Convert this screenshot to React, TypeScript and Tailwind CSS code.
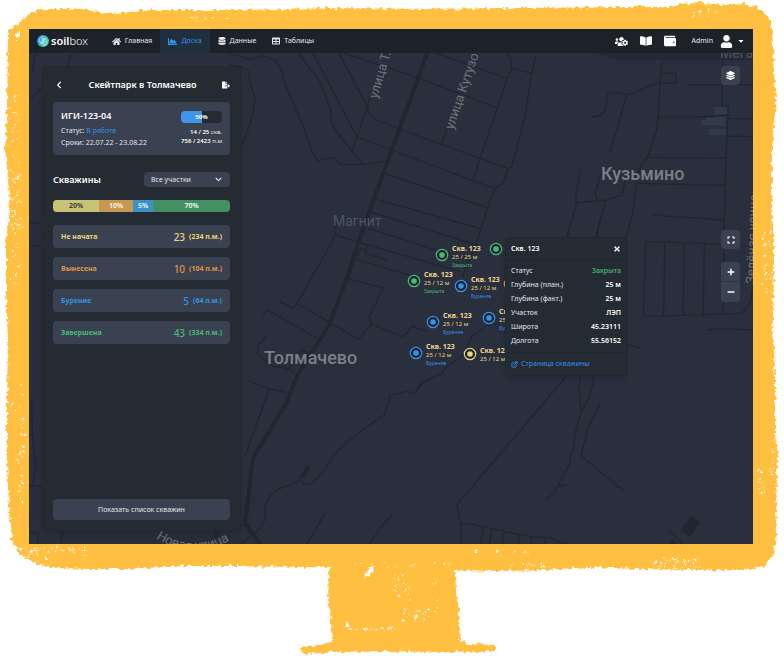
import type { ReactNode } from "react";
import {
  FaBookOpen,
  FaCaretDown,
  FaChartArea,
  FaChevronDown,
  FaChevronLeft,
  FaDatabase,
  FaExpand,
  FaFileExport,
  FaHome,
  FaLayerGroup,
  FaMinus,
  FaPlus,
  FaTable,
  FaTimes,
  FaUser,
  FaUsersCog,
  FaWallet,
} from "react-icons/fa";
import { FiExternalLink } from "react-icons/fi";

/* ---------- Hand-painted monitor ---------- */

function makeRandom(seed: number) {
  let s = seed;
  return () => {
    s = (s * 16807) % 2147483647;
    return s / 2147483647;
  };
}

type Area = [x: number, y: number, w: number, h: number, count: number];

const speckAreas: Area[] = [
  [10, 90, 9, 200, 60],
  [9, 170, 14, 60, 34],
  [19, 380, 5, 145, 34],
  [10, 400, 12, 60, 8],
  [50, 546, 36, 9, 20],
  [20, 548, 30, 18, 34],
  [150, 17, 140, 2, 12],
  [690, 9, 30, 8, 10],
  [762, 230, 10, 65, 36],
  [758, 470, 7, 28, 10],
  [771, 435, 4, 40, 12],
  [470, 551, 60, 2, 12],
  [510, 563, 40, 4, 20],
  [655, 558, 45, 10, 44],
  [335, 563, 115, 5, 20],
  [392, 572, 18, 28, 24],
  [402, 608, 34, 13, 30],
  [348, 628, 46, 2, 24],
  [432, 580, 6, 40, 6],
];

function buildSpecks() {
  const random = makeRandom(4821);
  return speckAreas.flatMap(([x, y, w, h, count]) =>
    Array.from({ length: count }, () => ({
      x: x + random() * w,
      y: y + random() * h,
      rx: 0.4 + random() * 0.8,
      ry: 0.3 + random() * 0.6,
    })),
  );
}

const specks = buildSpecks();

function PaintedMonitor() {
  return (
    <svg
      aria-hidden="true"
      className="absolute inset-0 h-full w-full"
      viewBox="0 0 784 656"
      preserveAspectRatio="none"
    >
      <defs>
        <filter id="chalk" x="-2%" y="-2%" width="104%" height="104%">
          <feTurbulence type="fractalNoise" baseFrequency="0.24" numOctaves="3" seed="7" />
          <feDisplacementMap in="SourceGraphic" scale="6" xChannelSelector="R" yChannelSelector="G" />
        </filter>
      </defs>
      <g filter="url(#chalk)">
        <path
          fill="#ffc043"
          d="M8 32 L18 24 L28 15 L36 11 L48 9 L82 9 L108 14 L150 10 L240 10 L330 8 L420 9 L520 8 L620 7 L672 7 L680 4 L700 3 L725 5 L745 4 L762 9 L771 20 L773 45 L774 70 L776 100 L772 150 L772 200 L774 260 L773 320 L775 380 L775 430 L778 455 L776 500 L777 535 L773 555 L764 566 L742 570 L700 570 L640 569 L590 567 L545 570 L500 571 L455 570 L456 592 L459 612 L460 640 L468 644 L495 645 L495 651 L440 652 L380 651 L340 652 L304 654 L300 648 L318 645 L332 642 L331 622 L328 600 L329 567 L290 567 L240 566 L180 566 L130 569 L90 569 L50 568 L32 562 L18 553 L12 540 L9 510 L7 460 L7 400 L8 340 L6 290 L6 240 L10 210 L8 180 L5 150 L7 110 Z"
        />
        <path d="M16 34 L20 31 L16 45 Z M366 571 L374 566 L372 573 L364 579 Z M346 620 L350 626 L346 628 Z" fill="#fff" />
        <g fill="#fff">
          {specks.map((s, i) => (
            <ellipse key={i} cx={s.x} cy={s.y} rx={s.rx} ry={s.ry} />
          ))}
        </g>
      </g>
    </svg>
  );
}

/* ---------- Map ---------- */

function CityMap() {
  return (
    <svg
      aria-hidden="true"
      className="absolute inset-0 h-full w-full"
      viewBox="29 53 724 491"
      preserveAspectRatio="xMinYMin slice"
    >
      <rect x="29" y="53" width="724" height="491" fill="#292f3d" />
      <path d="M595 53 L600 55 L617 60 L753 60 L753 53 Z" fill="#232a35" />
      <path
        d="M714 107h13v9h-13zM701 120h5v-2h9v-1h10v9h-7v-1h-17zM709 129h17v6h-17z"
        fill="#2f3a4c"
      />
      <g fill="none" stroke="#202631" strokeWidth="4" strokeLinejoin="round" strokeLinecap="round">
        <g transform="translate(230 40) scale(.33333)">
          <path d="M0 40L60 58L100 47L140 65L155 90L165 130L200 215L225 270L243 330L262 362L308 352L333 373L400 374L468 364" />
          <path d="M0 73L30 80L55 92L62 135L75 175L67 230L37 315" />
          <path d="M205 40L270 125L302 210L303 240L315 270L400 374" />
          <path d="M250 40L380 290L485 330L793 446" />
          <path d="M328 40L412 203Q420 232 440 240L510 268L835 386" />
          <path d="M345 40L560 112L803 204M418 175L412 203L365 335M620 40L832 115" />
          <path d="M830 40L840 50L845 85L905 100M845 85L832 115L750 355L730 418" />
          <path d="M917 50L905 100L885 230L845 380L835 386L820 428L793 446L770 510L742 600L697 710" />
          <path d="M650 270L636 312M468 402L770 502M440 478L755 567M425 517L742 615M415 565L718 662" />
          <path d="M830 597L1000 597" />
        </g>
        <g transform="translate(230 220) scale(.33333)">
          <path d="M315 0L315 45L300 75L262 145L243 172L232 200L190 265L152 245M315 45L380 65L690 155" />
          <path d="M205 252L385 358L425 312L417 290L440 245L458 203L352 175M425 312L518 350L530 340L545 318L592 335" />
          <path d="M97 287L113 270L265 357M108 352L83 378L83 403L125 437L175 447L200 460M178 444L215 390L240 400" />
          <path d="M58 483L117 507L175 518M117 507L47 705M380 118L560 172M383 108L393 85L408 90L412 75M408 90L408 100L470 120" />
          <path d="M600 478L572 490L555 520L528 514L480 528L465 583L400 628L340 677L305 712L285 750L240 793L222 793L210 778L180 795L145 807L122 825L105 857L105 900L85 930L35 970" />
          <path d="M285 880L232 970M485 888L460 912L420 970M0 935L40 915" />
          <path strokeWidth="14" d="M217 768L225 757L232 744" />
        </g>
        <g transform="translate(400 220) scale(.33333)">
          <path d="M340 290L315 335L290 310L255 320L215 350L185 410L140 440L125 460L70 485L50 510" />
          <path d="M515 0L500 50M600 0L590 50M680 375Q700 372 720 385" />
        </g>
        <g transform="translate(392 370) scale(.33333)">
          <path d="M525 14L510 35L195 403L206 463L206 522M206 463L235 462L340 485L425 502L475 502L500 517L525 521" />
          <path d="M274 473L265 522M300 478L292 522M337 486L330 522M382 495L377 522M420 502L416 522M460 505L457 522" />
          <path d="M565 14L561 60L568 125L548 195L544 240L537 255L533 280L497 348L485 370L460 390M497 348L527 344" />
          <path d="M605 14L604 40L590 85L568 125M624 100L590 170L575 225L568 257L675 348L695 357M827 482L840 488L870 521" />
          <path fill="#202631" stroke="none" d="M897 437L924 457L893 500L866 480ZM833 522L843 510L856 522Z" />
        </g>
        <g transform="translate(560 0) scale(.33333)">
          <path d="M307 180L300 247L295 352L290 390L263 470L240 500L228 560L218 640L198 712" />
          <path d="M300 247L200 285L170 278L143 282L137 320Q133 352 95 351M200 285L180 355L150 457" />
          <path d="M305 220L347 220L347 250L300 250M385 254L579 254M295 352L400 352L500 345" />
          <path d="M487 185L487 318L505 320L497 500L493 660L490 940M505 355L579 356M503 408L579 410" />
          <path d="M263 472L497 475M233 550L495 556M277 645L493 660" />
          <path d="M60 510L46 600L50 608L137 600L185 585L200 530M110 600L105 580L125 515M50 608L22 712M137 600L107 712" />
          <path d="M257 725L433 730L579 740M257 725L250 950L545 940L570 910L579 860M314 727L311 948M372 730L370 948M433 730L430 945" />
          <path d="M440 990L475 985L579 990" />
        </g>
        <g transform="translate(0 53) scale(.33333)">
          <path d="M105 0L97 60M218 0L190 65L125 105L87 142M90 508L125 513M90 578L125 578" />
        </g>
        <g transform="translate(0 400) scale(.33333)">
          <path d="M95 0L97 100L107 200L98 258M87 258L125 258M87 397L115 400L115 430M187 397L183 430M648 395L648 430" />
        </g>
        <path d="M427 53L420 73L399 130L387 163L362 232L347 278L329 325L318 343L297 376L286 404L253 458L245 523L260 544" />
      </g>
      <g className="font-[Roboto,'Noto_Sans',sans-serif]" fill="#7c7f87" fontWeight="500">
        <text x="601" y="180" fontSize="18">Кузьмино</text>
        <text x="264" y="364" fontSize="18">Толмачево</text>
        <text x="333" y="226" fontSize="14" fontWeight="400" fill="#4b5467">Магнит</text>
        <text x="720" y="58" fontSize="14" fontWeight="400" fill="#4b5467">Мега</text>
        <g fontSize="13" fontWeight="400" fill="#6f737c">
          <text transform="translate(377 99) rotate(-73)">улица Т.</text>
          <text transform="translate(453 130) rotate(-71)">улица Кутузо</text>
          <text transform="translate(755 284) rotate(-88)">Зелёная улица</text>
          <path id="lane" d="M156 538Q196 564 240 534" fill="none" />
          <text>
            <textPath href="#lane">Новая улица</textPath>
          </text>
        </g>
      </g>
    </svg>
  );
}

type Tone = "green" | "blue" | "yellow" | "orange";

const toneText: Record<Tone, string> = {
  green: "text-[#48bb78]",
  blue: "text-[#3592e6]",
  yellow: "text-[#ecd37c]",
  orange: "text-[#e0924a]",
};

type Well = { x: number; y: number; tone: Tone; depth?: string; status?: string };

const wells: Well[] = [
  { x: 413, y: 202, tone: "green", depth: "25 / 25 м", status: "Закрыта" },
  { x: 467, y: 196, tone: "green" },
  { x: 385, y: 228, tone: "green", depth: "25 / 12 м", status: "Закрыта" },
  { x: 432, y: 233, tone: "blue", depth: "25 / 12 м", status: "Бурение" },
  { x: 481, y: 231, tone: "orange" },
  { x: 404, y: 269, tone: "blue", depth: "25 / 12 м", status: "Бурение" },
  { x: 460, y: 265, tone: "blue", depth: "25 / 12 м", status: "Бурение" },
  { x: 387, y: 300, tone: "blue", depth: "25 / 12 м", status: "Бурение" },
  { x: 441, y: 301, tone: "yellow", depth: "25 / 12 м" },
];

function WellPin({ well }: { well: Well }) {
  return (
    <div className="absolute flex -translate-y-1/2 items-center gap-[3px]" style={{ left: well.x - 7, top: well.y }}>
      <svg viewBox="0 0 14 14" className={`size-[14px] ${toneText[well.tone]}`} aria-hidden="true">
        <circle cx="7" cy="7" r="5.700" fill="#1d2330" stroke="currentColor" strokeWidth="1.200" />
        <circle cx="7" cy="7" r="2.800" fill="currentColor" />
      </svg>
      {well.depth && (
        <div className="pt-[2px] text-[7px] leading-[9px] whitespace-nowrap text-[#f1d68a]">
          <p className="font-bold">Скв. 123</p>
          <p className="text-[6px]">{well.depth}</p>
          {well.status && <p className={`text-[5px] leading-[6px] ${toneText[well.tone]}`}>{well.status}</p>}
        </div>
      )}
    </div>
  );
}

const details = [
  { label: "Статус", value: "Закрыта", accent: true },
  { label: "Глубина (план.)", value: "25 м" },
  { label: "Глубина (факт.)", value: "25 м" },
  { label: "Участок", value: "ЛЭП" },
  { label: "Широта", value: "45.23111" },
  { label: "Долгота", value: "55.56152" },
];

function WellPopup() {
  return (
    <article className="absolute left-[476px] top-[184px] w-[122px] rounded border border-[#20262e] bg-[#252b33] text-[7px] leading-[14px] text-[#e2e5ea] shadow-md">
      <header className="flex h-[22px] items-center justify-between border-b border-[#1f252d] px-[5px]">
        <h3 className="font-semibold text-white">Скв. 123</h3>
        <button type="button" aria-label="Закрыть" className="text-white">
          <FaTimes className="size-[8px]" />
        </button>
      </header>
      <dl className="px-[5px] py-1">
        {details.map((d) => (
          <div key={d.label} className="flex justify-between">
            <dt>{d.label}</dt>
            <dd className={d.accent ? "font-medium text-[#48bb78]" : "font-semibold text-white"}>{d.value}</dd>
          </div>
        ))}
      </dl>
      <footer className="border-t border-[#1f252d] px-[5px] py-1">
        <a href="#well" className="flex items-center gap-[3px] text-[#3592e6]">
          <FiExternalLink className="size-[7px]" strokeWidth={3} />
          Страница скважины
        </a>
      </footer>
    </article>
  );
}

/* ---------- Header ---------- */

function Logo() {
  return (
    <a href="#home" className="flex items-center gap-[2px] pl-2 text-[11px] leading-[14px] text-white">
      <svg viewBox="0 0 24 24" className="size-[12px]" aria-hidden="true">
        <defs>
          <linearGradient id="logo" x1="0" y1="0" x2="1" y2=".6">
            <stop offset="0" stopColor="#2f6fd8" />
            <stop offset=".5" stopColor="#38b4cf" />
            <stop offset="1" stopColor="#4fd39b" />
          </linearGradient>
        </defs>
        <circle cx="12" cy="12" r="12" fill="url(#logo)" />
        <g fill="none" stroke="#fff" strokeOpacity=".75" strokeWidth="1.500" strokeLinecap="round">
          <path d="M12 3.500C6 3.500 3 8 5 12.500C6 15 9 16 12 14.500" />
          <path d="M12 20.500C18 20.500 21 16 19 11.500C18 9 15 8 12 9.500" />
          <path d="M8 9C10 6 15 6 18 8M16 15C14 18 9 18 6 16" />
          <circle cx="12" cy="12" r="2" />
        </g>
      </svg>
      <span>
        <b className="font-semibold">soil</b>
        <span className="font-light">box</span>
      </span>
    </a>
  );
}

function NavLink({ icon, children, active = false }: { icon: ReactNode; children: ReactNode; active?: boolean }) {
  return (
    <a
      href="#section"
      aria-current={active ? "page" : undefined}
      className={`flex items-center gap-1 px-2 ${active ? "bg-[#1f2f3e] text-[#3592e6]" : "text-[#e6e8ec]"}`}
    >
      {icon}
      {children}
    </a>
  );
}

function TopBar() {
  return (
    <header className="flex h-6 shrink-0 justify-between bg-[#1d2228] text-[7px] leading-[10px]">
      <div className="flex">
        <Logo />
        <nav className="ml-4 flex">
          <NavLink icon={<FaHome className="size-[9px]" />}>Главная</NavLink>
          <NavLink icon={<FaChartArea className="size-[9px]" />} active>
            Доска
          </NavLink>
          <NavLink icon={<FaDatabase className="size-[8px]" />}>Данные</NavLink>
          <NavLink icon={<FaTable className="size-[8px]" />}>Таблицы</NavLink>
        </nav>
      </div>
      <div className="flex items-center gap-3 pr-2 text-white">
        <button type="button" aria-label="Пользователи">
          <FaUsersCog className="size-[13px]" />
        </button>
        <button type="button" aria-label="Справочник">
          <FaBookOpen className="size-[12px]" />
        </button>
        <button type="button" aria-label="Кошелёк">
          <FaWallet className="size-[12px]" />
        </button>
        <button type="button" className="ml-1 flex items-center gap-[7px] text-[#e6e8ec]">
          Admin
          <span className="flex items-center gap-1 text-white">
            <FaUser className="size-[13px]" />
            <FaCaretDown className="size-[8px]" />
          </span>
        </button>
      </div>
    </header>
  );
}

/* ---------- Side panel ---------- */

const shares = [
  { label: "20%", className: "w-[46px] bg-[#c9c277] text-[#2b3038]" },
  { label: "10%", className: "w-[34px] bg-[#c79850] text-white" },
  { label: "5%", className: "w-[20px] bg-[#3a92c8] text-white" },
  { label: "70%", className: "flex-1 bg-[#459063] text-white" },
];

const stages: { name: string; count: number; length: string; tone: Tone }[] = [
  { name: "Не начата", count: 23, length: "(234 п.м.)", tone: "yellow" },
  { name: "Вынесена", count: 10, length: "(104 п.м.)", tone: "orange" },
  { name: "Бурение", count: 5, length: "(64 п.м.)", tone: "blue" },
  { name: "Завершена", count: 43, length: "(334 п.м.)", tone: "green" },
];

function SidePanel() {
  return (
    <aside className="flex w-[199px] flex-col rounded border border-[#22282f] bg-[#252b33] p-[10px] text-[7px] leading-[10px] text-[#e2e5ea] shadow-lg">
      <div className="flex h-4 items-center justify-between pl-[2px]">
        <button type="button" aria-label="Назад" className="text-white">
          <FaChevronLeft className="size-[8px]" />
        </button>
        <h1 className="text-[9px] leading-[12px] font-semibold text-white">Скейтпарк в Толмачево</h1>
        <button type="button" aria-label="Экспорт" className="text-white">
          <FaFileExport className="size-[8px]" />
        </button>
      </div>

      <section className="mt-[9px] flex h-[53px] justify-between rounded bg-[#3a4151] px-2 pt-[7px]">
        <div>
          <h2 className="text-[9px] leading-[14px] font-semibold text-white">ИГИ-123-04</h2>
          <p className="mt-[2px] leading-[12px]">
            Статус: <span className="text-[#3592e6]">В работе</span>
          </p>
          <p className="leading-[12px]">Сроки: 22.07.22 - 23.08.22</p>
        </div>
        <div className="text-right text-[6px] leading-[9px]">
          <div className="mt-[2px] mb-[5px] ml-auto h-3 w-[41px] rounded bg-gradient-to-r from-[#3c96ea] from-50% to-[#252b33] to-50% text-center leading-[12px] font-bold text-white">
            50%
          </div>
          <p>
            <b className="font-semibold text-white">14 / 25</b> скв.
          </p>
          <p>
            <b className="font-semibold text-white">756 / 2423</b> п.м
          </p>
        </div>
      </section>

      <div className="mt-[17px] flex h-[15px] items-center justify-between">
        <h2 className="text-[9px] leading-[12px] font-semibold text-white">
          <label htmlFor="area">Скважины</label>
        </h2>
        <div className="relative h-full w-[86px]">
          <select
            id="area"
            className="h-full w-full appearance-none rounded bg-[#3a4151] px-[7px] text-[7px] leading-[10px] text-[#e2e5ea]"
          >
            <option>Все участки</option>
          </select>
          <FaChevronDown className="pointer-events-none absolute top-1 right-2 size-[7px] text-white" />
        </div>
      </div>

      <div className="mt-[13px] flex h-3 overflow-hidden rounded text-center leading-[12px] font-semibold">
        {shares.map((s) => (
          <span key={s.label} className={s.className}>
            {s.label}
          </span>
        ))}
      </div>

      <ul className="mt-[13px] flex flex-col gap-[9px]">
        {stages.map((s) => (
          <li
            key={s.name}
            className={`flex h-[23px] items-center justify-between rounded bg-[#3a4151] px-2 font-bold ${toneText[s.tone]}`}
          >
            <span>{s.name}</span>
            <span className="flex items-center gap-1">
              <span className="text-[10px] leading-[12px] font-medium">{s.count}</span>
              {s.length}
            </span>
          </li>
        ))}
      </ul>

      <button type="button" className="mt-auto h-[21px] shrink-0 rounded bg-[#3a4151] text-[#e2e5ea]">
        Показать список скважин
      </button>
    </aside>
  );
}

/* ---------- Map controls ---------- */

function MapControls() {
  const box = "flex w-[19px] items-center justify-center";
  return (
    <div className="flex flex-col text-white">
      <button type="button" aria-label="Слои" className={`${box} h-[19px] rounded bg-[#3a4151]`}>
        <FaLayerGroup className="size-[9px]" />
      </button>
      <button type="button" aria-label="Во весь экран" className={`${box} mt-[145px] h-[19px] rounded bg-[#3a4151]`}>
        <FaExpand className="size-[8px]" />
      </button>
      <div className="mt-[13px] divide-y divide-[#2c3341] overflow-hidden rounded bg-[#3a4151]">
        <button type="button" aria-label="Приблизить" className={`${box} h-5`}>
          <FaPlus className="size-[8px]" />
        </button>
        <button type="button" aria-label="Отдалить" className={`${box} h-5`}>
          <FaMinus className="size-[8px]" />
        </button>
      </div>
    </div>
  );
}

export default function App() {
  return (
    <div className="relative flex aspect-[784/656] w-full bg-white pt-[29px] pr-[31px] pb-[112px] pl-[29px] font-['Noto_Sans',sans-serif]">
      <PaintedMonitor />
      <div className="relative flex flex-1 flex-col overflow-hidden">
        <TopBar />
        <main className="relative flex flex-1 overflow-hidden">
          <CityMap />
          <div className="absolute inset-0">
            {wells.map((w) => (
              <WellPin key={`${w.x}-${w.y}`} well={w} />
            ))}
            <WellPopup />
          </div>
          <div className="relative flex flex-1 justify-between p-[13px]">
            <SidePanel />
            <MapControls />
          </div>
        </main>
      </div>
    </div>
  );
}
